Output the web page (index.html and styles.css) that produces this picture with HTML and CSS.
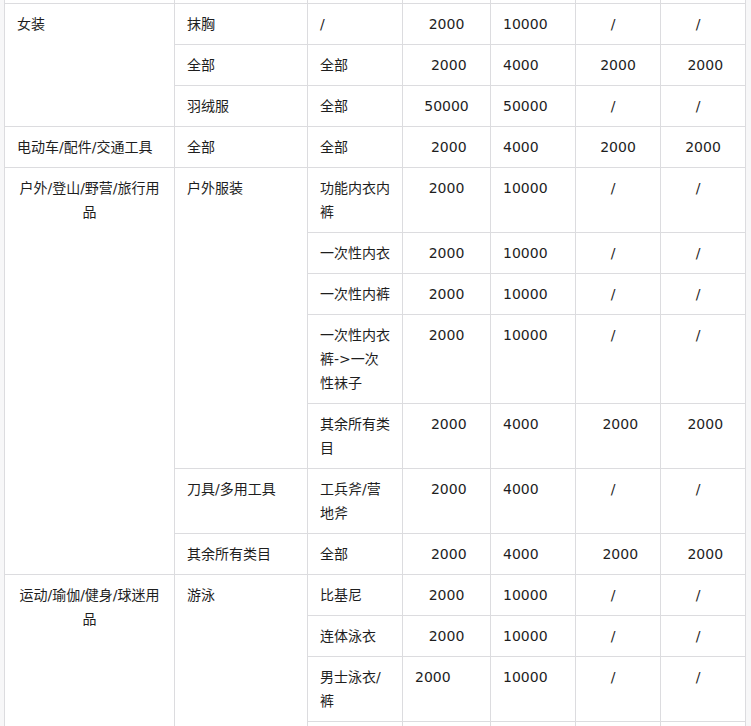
FILE: index.html
```html
<!DOCTYPE html>
<html lang="zh-CN">
<head>
<meta charset="utf-8">
<title>类目保证金</title>
<link rel="stylesheet" href="styles.css">
</head>
<body>
<table class="grid">
  <colgroup>
    <col class="c1"><col class="c2"><col class="c3"><col class="c4"><col class="c5"><col class="c6"><col class="c7">
  </colgroup>
  <tbody>
    <tr class="prev"><td></td><td></td><td></td><td></td><td></td><td></td><td></td></tr>
    <tr>
      <td rowspan="3">女装</td>
      <td>抹胸</td><td>/</td><td class="ctr">2000</td><td>10000</td><td class="ctr sl">/</td><td class="ctr sl">/</td>
    </tr>
    <tr>
      <td>全部</td><td>全部</td><td class="ctr">&nbsp;2000</td><td>4000</td><td class="ctr">2000</td><td class="ctr">&nbsp;2000</td>
    </tr>
    <tr>
      <td>羽绒服</td><td>全部</td><td class="ctr">50000</td><td>50000</td><td class="ctr sl">/</td><td class="ctr sl">/</td>
    </tr>
    <tr>
      <td>电动车/配件/交通工具</td>
      <td>全部</td><td>全部</td><td class="ctr">&nbsp;2000</td><td>4000</td><td class="ctr">2000</td><td class="ctr">2000</td>
    </tr>
    <tr>
      <td rowspan="7" class="ctr">户外/登山/野营/旅行用品</td>
      <td rowspan="5">户外服装</td>
      <td>功能内衣内裤</td><td class="ctr">2000</td><td>10000</td><td class="ctr sl">/</td><td class="ctr sl">/</td>
    </tr>
    <tr>
      <td>一次性内衣</td><td class="ctr">2000</td><td>10000</td><td class="ctr sl">/</td><td class="ctr sl">/</td>
    </tr>
    <tr>
      <td>一次性内裤</td><td class="ctr">2000</td><td>10000</td><td class="ctr sl">/</td><td class="ctr sl">/</td>
    </tr>
    <tr>
      <td>一次性内衣裤-&gt;一次性袜子</td><td class="ctr">2000</td><td>10000</td><td class="ctr sl">/</td><td class="ctr sl">/</td>
    </tr>
    <tr>
      <td>其余所有类目</td><td class="ctr">&nbsp;2000</td><td>4000</td><td class="ctr">&nbsp;2000</td><td class="ctr">&nbsp;2000</td>
    </tr>
    <tr>
      <td>刀具/多用工具</td>
      <td>工兵斧/营地斧</td><td class="ctr">&nbsp;2000</td><td>4000</td><td class="ctr sl">/</td><td class="ctr sl">/</td>
    </tr>
    <tr>
      <td>其余所有类目</td>
      <td>全部</td><td class="ctr">&nbsp;2000</td><td>4000</td><td class="ctr">&nbsp;2000</td><td class="ctr">&nbsp;2000</td>
    </tr>
    <tr>
      <td rowspan="4" class="ctr">运动/瑜伽/健身/球迷用品</td>
      <td rowspan="4">游泳</td>
      <td>比基尼</td><td class="ctr">2000</td><td>10000</td><td class="ctr sl">/</td><td class="ctr sl">/</td>
    </tr>
    <tr>
      <td>连体泳衣</td><td class="ctr">2000</td><td>10000</td><td class="ctr sl">/</td><td class="ctr sl">/</td>
    </tr>
    <tr>
      <td>男士泳衣/裤</td><td>2000</td><td>10000</td><td class="ctr sl">/</td><td class="ctr sl">/</td>
    </tr>
    <tr class="next">
      <td></td><td></td><td></td><td></td><td></td>
    </tr>
  </tbody>
</table>
</body>
</html>
```

FILE: styles.css
```css
html, body {
  margin: 0;
  padding: 0;
  background: #f7f7f8;
}

body {
  padding: 0 5px 0 4px;
  overflow: hidden;
  font-family: "DejaVu Sans", "Noto Sans CJK SC", sans-serif;
  font-size: 14px;
  color: #1e1e1e;
}

.grid {
  border-collapse: collapse;
  table-layout: fixed;
  width: 742px;
  margin-top: -38px;
  background: #fff;
}

.grid td {
  border: 1px solid #dcdcdf;
  padding: 8px 12px;
  line-height: 24px;
  vertical-align: top;
  text-align: left;
  word-break: break-all;
  font-family: "DejaVu Sans", "Noto Sans CJK SC", sans-serif;
}

.grid td.ctr {
  text-align: center;
}

.grid td.sl {
  padding-right: 22px;
}

.grid .prev td,
.grid .next td {
  height: 24px;
}

.c1 { width: 170px; }
.c2 { width: 133px; }
.c3 { width: 95px; }
.c4 { width: 88px; }
.c5 { width: 85px; }
.c6 { width: 85px; }
.c7 { width: 85px; }
```
